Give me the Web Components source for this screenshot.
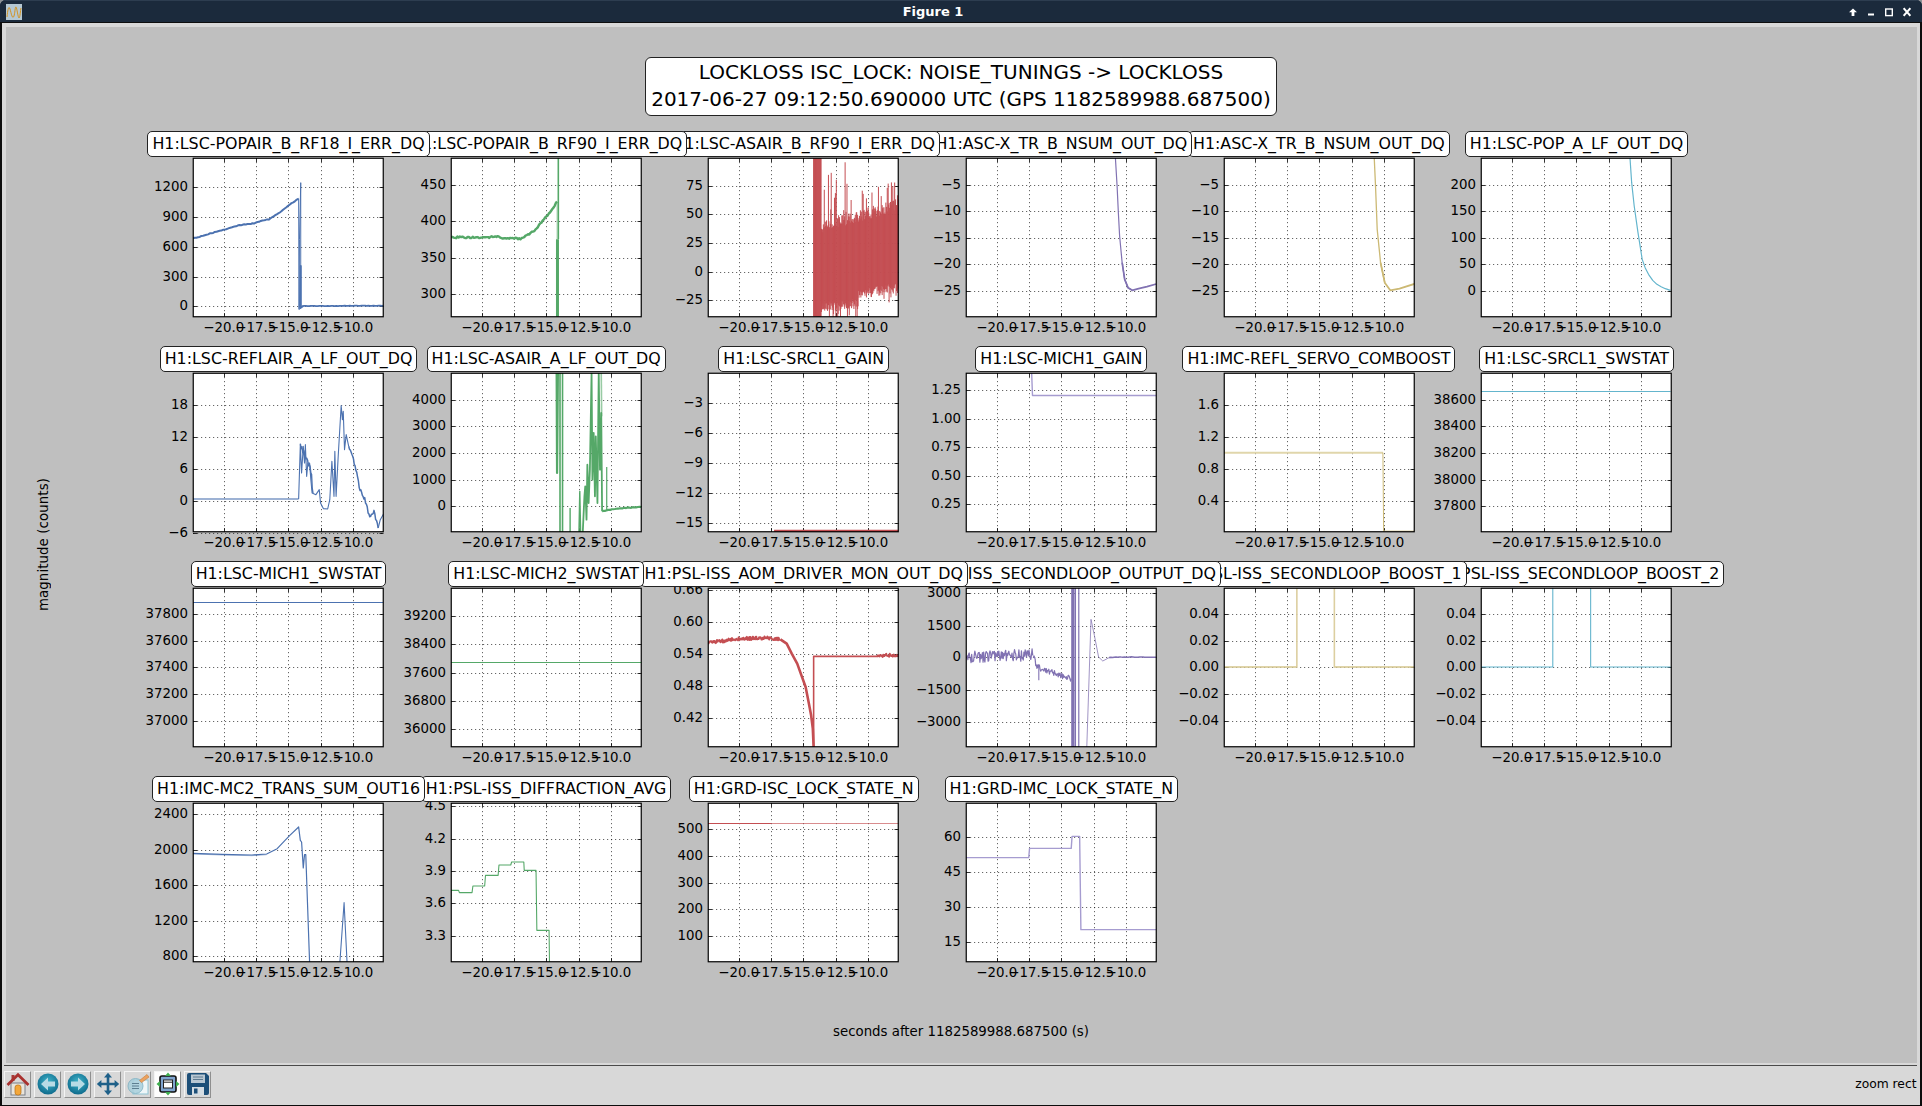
<!DOCTYPE html>
<html><head><meta charset="utf-8"><title>Figure 1</title>
<style>html,body{margin:0;padding:0;width:1922px;height:1106px;overflow:hidden;background:#8d9296;font-family:"DejaVu Sans",sans-serif}</style>
</head><body>
<plot-window></plot-window>
<script>
const FONT='"DejaVu Sans","Liberation Sans",sans-serif';
const BLUE='#4c72b0',GREEN='#55a868',RED='#c44e52',PURP='#8172b2',YEL='#ccb974',CYAN='#64b5cd';
let seed=12345;
const rnd=()=>{seed=(seed*1664525+1013904223)>>>0;return seed/4294967296};
// interpolate a trace and add noise
function N(pts,amp,step){
  let out=[];
  for(let i=0;i<pts.length-1;i++){
    const [a,b]=pts[i],[c,d]=pts[i+1];
    const n=Math.max(1,Math.round(Math.abs(c-a)/step));
    for(let k=0;k<n;k++){out.push((a+(c-a)*k/n).toFixed(1)+','+(b+(d-b)*k/n+(rnd()-.5)*2*amp).toFixed(1));}
  }
  out.push(pts[pts.length-1].join(','));
  return out.join(' ');
}
function redBurst(){
  let s=[];
  for(let x=414;x<=616;x+=1.1){
    let top,bot;
    const t=(x-414)/202;
    if(x<432){top=476;bot=952}
    else{
      top=690-75*t+(rnd()-.5)*36;
      bot=(x<520?925-20*t:885-(x-520)*.2)+(rnd()-.5)*30;
      if(x<525&&rnd()<.07)top=476+rnd()*110;
      else if(rnd()<.09)top-=20+rnd()*70;
      if(x<525&&rnd()<.1)bot=952;
      else if(rnd()<.05)bot+=30;
    }
    s.push(x.toFixed(1)+','+top.toFixed(1)+' '+x.toFixed(1)+','+bot.toFixed(1));
  }
  return s.join('|');
}
const xTicks=[30.7,62.7,95.1,127.9,159.9],xLab=['\u221220.0','\u221217.5','\u221215.0','\u221212.5','\u221210.0'];
const W=190.5,H=159;

class FigPlot extends HTMLElement{
  connectedCallback(){
    if(this.shadowRoot)return;
    const d=this.data,sr=this.attachShadow({mode:'open'});
    const mx=x=>((x-d.ox)/(d.fx||2.376)).toFixed(2),my=y=>((y-d.oy)/3).toFixed(2);
    let g='';
    xTicks.forEach((x,i)=>{const px=Math.round(x)+.5;
      g+=`<line class="grid" x1="${px}" x2="${px}" y1="0" y2="${H}"/><line class="tick" x1="${px}" x2="${px}" y1="0" y2="4"/><line class="tick" x1="${px}" x2="${px}" y1="${H}" y2="${H-4}"/>`;
      g+=`<text class="xl" x="${x}" y="${H+15.4}">${xLab[i]}</text>`;
    });
    d.y.forEach(([lab,zy])=>{const py=Math.round((zy-d.oy)/3)+.5;
      g+=`<line class="grid" x1="0" x2="${W}" y1="${py}" y2="${py}"/><line class="tick" x1="0" x2="4" y1="${py}" y2="${py}"/><line class="tick" x1="${W}" x2="${W-4}" y1="${py}" y2="${py}"/>`;
      g+=`<text class="yl" x="-5" y="${py+3.8}">${lab}</text>`;
    });
    let lines='';
    d.l.forEach(l=>{
      const subs=l.p.split('|').map(s=>{const pts=s.trim().split(/\s+/).map(q=>{const [a,b]=q.split(',');return mx(+a)+','+my(+b)});return 'M'+pts.join('L')}).join('');
      lines+=`<path d="${subs}" fill="none" stroke="${l.c||d.c}" stroke-width="${l.w||1}" stroke-opacity="${l.o||1}" stroke-linejoin="round"/>`;
    });
    sr.innerHTML=`<style>
:host{display:block;position:relative;width:${W}px;height:${H}px;z-index:${d.z}}
svg.ax{display:block;overflow:visible;position:absolute;left:0;top:0}
.grid{stroke:#000;stroke-width:.8;stroke-dasharray:1.2 2.8;stroke-opacity:.75}
.tick{stroke:#000;stroke-width:.8}
text{font:13.33px ${FONT};fill:#000}
.xl{text-anchor:middle}.yl{text-anchor:end}
.wrap{position:absolute;left:-220px;right:-220px;bottom:calc(100% + 1.4px);display:flex;justify-content:center;pointer-events:none}
.pill{background:#fff;border:1px solid #222;border-radius:5px;height:24px;padding:0 4px;font:15.85px/24px ${FONT};color:#000;white-space:nowrap}
</style>
<svg class="ax" width="${W}" height="${H}" viewBox="0 0 ${W} ${H}">
<rect width="${W}" height="${H}" fill="#fff"/>${g}
<svg x="0" y="0" width="${W}" height="${H}" viewBox="0 0 ${W} ${H}" overflow="hidden">${lines}</svg>
<rect x=".25" y=".25" width="${W-.5}" height="${H-.5}" fill="none" stroke="#000" stroke-width="1.2"/>
</svg>
<div class="wrap"><div class="pill">${d.t}</div></div>`;
  }
}
customElements.define('fig-plot',FigPlot);

class FigGrid extends HTMLElement{
  constructor(){super();this.attachShadow({mode:'open'}).innerHTML=`<style>
:host{display:grid;grid-template-columns:repeat(6,${W}px);column-gap:67.1px;row-gap:56px;align-self:start}
</style><slot></slot>`}
}
customElements.define('fig-grid',FigGrid);

class FigSuptitle extends HTMLElement{
  constructor(){super();this.attachShadow({mode:'open'}).innerHTML=`<style>
:host{display:block;justify-self:center;box-sizing:border-box;height:59.4px;padding:1.7px 5px 0;background:#fff;border:1px solid #222;border-radius:6px;font:20px/27px ${FONT};color:#000;text-align:center;white-space:nowrap}
</style><slot></slot>`}
}
customElements.define('fig-suptitle',FigSuptitle);

class ToolButton extends HTMLElement{
  constructor(){super();this.attachShadow({mode:'open'}).innerHTML=`<style>
:host{display:flex;align-items:center;justify-content:center;box-sizing:border-box;width:27px;height:27px;background:var(--b,#d8d8d8);border:1px solid;border-color:#f4f4f4 #8f8f8f #8f8f8f #f4f4f4}
</style><slot></slot>`}
}
customElements.define('tool-button',ToolButton);

class ToolBar extends HTMLElement{
  constructor(){super();const S=(b)=>`<svg width="24" height="24" viewBox="0 0 24 24" xmlns="http://www.w3.org/2000/svg">${b}</svg>`;
  this.attachShadow({mode:'open'}).innerHTML=`<style>
:host{display:flex;align-items:center;flex:1;padding:0 0 2px 0;margin-left:-1.5px;background:#d8d8d8;border-top:1px solid #4a4a4a;margin-top:2px}
.b{display:flex;gap:3px}
.m{margin-left:auto;font:12.3px ${FONT};color:#000}
</style><div class="b">
<tool-button>${S(`<rect x="5" y="11" width="14" height="12" fill="#e9e5dc" stroke="#7b7f88"/><rect x="9" y="13" width="6" height="10" rx="2.5" fill="#f3a73a" stroke="#b56d14" stroke-width=".7"/><rect x="5.5" y="3" width="3" height="6" fill="#a63a38"/><path d="M1.5 13L12 2.8 22.5 13" fill="none" stroke="#a9312f" stroke-width="2.8"/>`)}</tool-button>
<tool-button>${S(`<defs><radialGradient id="g1" cx=".5" cy=".4" r=".6"><stop offset="0" stop-color="#3fb4c9"/><stop offset="1" stop-color="#0f6b8d"/></radialGradient></defs><circle cx="12" cy="12" r="10.5" fill="url(#g1)"/><path d="M5 12l7-6.5V9.5h7v5h-7v4z" fill="#b8dbe5"/>`)}</tool-button>
<tool-button>${S(`<defs><radialGradient id="g2" cx=".5" cy=".4" r=".6"><stop offset="0" stop-color="#3fb4c9"/><stop offset="1" stop-color="#0f6b8d"/></radialGradient></defs><circle cx="12" cy="12" r="10.5" fill="url(#g2)"/><path d="M19 12l-7-6.5V9.5H5v5h7v4z" fill="#b8dbe5"/>`)}</tool-button>
<tool-button>${S(`<path d="M12 4v16M4 12h16" stroke="#1e6089" stroke-width="2.6"/><path d="M12 .8l4 4.6H8zM12 23.2l4-4.6H8zM.8 12l4.6-4v8zM23.2 12l-4.6-4v8z" fill="#1e6089"/>`)}</tool-button>
<tool-button>${S(`<rect x="7" y="8" width="15" height="14" fill="#eef6f8" stroke="#8fc4d4"/><circle cx="9.5" cy="14" r="7.5" fill="#a9d0dc" stroke="#7fb2c4" opacity=".85"/><path d="M6 11.5h7M6 14h7M6 16.5h7" stroke="#5d7f90" stroke-width="1.1"/><path d="M13.5 8.5L21 2.5l2 2.6-7.5 5.5z" fill="#eda25f" stroke="#c47d3a" stroke-width=".6"/>`)}</tool-button>
<tool-button style="--b:#fdfdfd">${S(`<rect x="4" y="4" width="16" height="16" rx="2" fill="#7fa4cf" stroke="#111" stroke-width="1.6"/><rect x="7.5" y="8" width="9" height="8" fill="#fff" stroke="#222"/><path d="M7.5 10.2h9" stroke="#222"/><path d="M12 .5l3 3.5H9zM12 23.5l3-3.5H9zM.5 12L4 9v6zM23.5 12L20 9v6z" fill="#3fae4f"/>`)}</tool-button>
<tool-button>${S(`<path d="M1 3a2 2 0 0 1 2-2h17l3 3v17a2 2 0 0 1-2 2H3a2 2 0 0 1-2-2z" fill="#1d4f78"/><rect x="5" y="2.5" width="14" height="8.5" fill="#b9c7d2"/><path d="M7 5h10M7 7.5h10" stroke="#5d7a90"/><rect x="6" y="15" width="12" height="8" fill="#d5dde3"/><rect x="8" y="16.5" width="3.5" height="5" fill="#1d4f78"/>`)}</tool-button>
</div><div class="m"><slot></slot></div>`}
}
customElements.define('tool-bar',ToolBar);

class FigCanvas extends HTMLElement{
  constructor(){super();this.attachShadow({mode:'open'}).innerHTML=`<style>
:host{display:grid;box-sizing:border-box;height:1036px;flex:none;background:#bfbfbf;grid-template-columns:187.8px 1fr;grid-template-rows:auto auto auto;align-content:start;padding-top:30.3px;font:13.33px ${FONT};color:#000}
.top{grid-column:1/3;display:flex;justify-content:center;margin-bottom:42px}
.yl{writing-mode:vertical-rl;transform:rotate(180deg);align-self:center;justify-self:start;margin:0 0 32px 30px;white-space:nowrap;letter-spacing:.1px}
.xl{grid-column:1/3;text-align:center;margin-top:62px;line-height:16px}
</style>
<div class="top"><slot name="sup"></slot></div>
<div class="yl">magnitude (counts)</div>
<slot name="grid"></slot>
<div class="xl">seconds after 1182589988.687500 (s)</div>`}
}
customElements.define('fig-canvas',FigCanvas);

class PlotWindow extends HTMLElement{
  constructor(){super();this.attachShadow({mode:'open'}).innerHTML=`<style>
:host{display:flex;flex-direction:column;width:1922px;height:1106px;overflow:hidden;border-radius:6px 6px 0 0;background:#1b2a3c}
.bar{display:flex;align-items:center;height:22px;flex:none;background:#1b2a3c;border-top:1px solid #2d3d50;box-sizing:border-box;color:#fff}
.ic{margin-left:6px;width:16px;height:16px;flex:none;display:block}
.tt{flex:1;text-align:center;font:bold 13px/20px ${FONT};padding-right:5px}
.ctl{display:flex;align-items:center;margin-right:11px}
.ctl svg{display:block}
.main{flex:1;display:flex;flex-direction:column;min-height:0;background:#d8d8d8;border:solid #0d0d0d;border-width:1px 2px 1px 2px;padding:3.5px 3.5px 0}
</style>
<div class="bar">
<svg class="ic" viewBox="0 0 16 16"><rect width="16" height="16" fill="#b5c8d3"/><path d="M1 13C2 3 3 2 4 5S6 15 7.5 13 9 2 10 3s2 11 3 11 1.5-8 2-10" fill="none" stroke="#d4921f" stroke-width="1"/></svg>
<div class="tt">Figure 1</div>
<div class="ctl">
<svg width="8" height="10" viewBox="0 0 8 10"><path d="M4 1.5l4 3.8H5.400v3.700H2.600V5.300H0z" fill="#fff"/></svg>
<svg width="6" height="10" viewBox="0 0 6 10" style="margin-left:11px"><rect y="6.5" width="6" height="2" fill="#fff"/></svg>
<svg width="8" height="10" viewBox="0 0 8 10" style="margin-left:11px"><rect x=".7" y="2" width="6.6" height="6.6" fill="none" stroke="#fff" stroke-width="1.4"/></svg>
<svg width="8" height="10" viewBox="0 0 8 10" style="margin-left:10px"><path d="M.6 1.2l6.800 7.600M7.400 1.200L.6 8.800" stroke="#fff" stroke-width="2"/></svg>
</div></div>
<div class="main"><slot></slot></div>`}
}
customElements.define('plot-window',PlotWindow);

const X5=[['\u22125',556],['\u221210',634],['\u221215',716],['\u221220',794],['\u221225',875]];
const B=[['0.04',826],['0.02',907],['0.00',985],['\u22120.02',1066],['\u22120.04',1147]];
const plots=[
{t:'H1:LSC-POPAIR_B_RF18_I_ERR_DQ',c:BLUE,ox:460,oy:476,y:[['1200',562],['900',652],['600',742],['300',832],['0',919]],
 l:[{w:2,p:N([[460,718],[500,703],[535,690],[570,678],[605,672],[625,663],[640,660],[670,636],[690,615],[711,598]],1,4)},
    {w:1,p:'711,598 712,930 713,720 716,550 716,925 713,930 720,920'},{w:2,p:'714,925 716,800 716,925 722,920'},{w:1.8,p:N([[720,920],[913,919]],.6,4)}]},
{t:'H1:LSC-POPAIR_B_RF90_I_ERR_DQ',c:GREEN,ox:1072,oy:476,y:[['450',556],['400',664],['350',775],['300',883]],
 l:[{w:2.4,p:N([[1072,714],[1160,714],[1180,711],[1195,717],[1240,718],[1270,695],[1290,665],[1310,635],[1324,607]],2.5,3)},
    {w:1,o:.5,p:'1324,607 1324,720'},{w:3,p:'1325,720 1325,952'},{w:1.6,p:'1327,476 1327,720'}]},
{t:'H1:LSC-ASAIR_B_RF90_I_ERR_DQ',c:RED,ox:163,oy:476,y:[['75',560],['50',645],['25',730],['0',817],['\u221225',901]],
 l:[{w:1,p:redBurst()}]},
{t:'H1:ASC-X_TR_B_NSUM_OUT_DQ',c:PURP,ox:775,oy:476,y:X5,
 l:[{w:1.2,p:'1130,476 1134,560 1137,640 1140,710 1146,790 1152,840 1160,865 1170,873'},{w:1.7,p:'1146,790 1152,840 1160,865 1170,873 1185,868 1205,862 1227,854'}]},
{t:'H1:ASC-X_TR_B_NSUM_OUT_DQ',c:YEL,ox:-92,oy:476,y:X5,
 l:[{w:1.3,p:'265,476 268,560 272,690 280,790 290,850'},{w:1.8,p:'280,790 290,850 303,873 325,868 362,853'}]},
{t:'H1:LSC-POP_A_LF_OUT_DQ',c:CYAN,ox:522,oy:476,y:[['200',556],['150',634],['100',716],['50',794],['0',874]],
 l:[{w:1.2,p:'876,476 880,550 886,620 895,700 905,780 912,805 920,825 930,843 940,855 950,862 960,868 972,873'}]},

{t:'H1:LSC-REFLAIR_A_LF_OUT_DQ',c:BLUE,ox:460,oy:130,y:[['18',227],['12',323],['6',419],['0',514],['\u22126',610]],
 l:[{w:1.8,o:.55,p:'460,508 711,508'},{w:1.1,p:'711,508 715,345 718,430 722,350 725,400 727,345 730,440 733,400 737,400 740,450 743,490 752,495 760,480 763,520 770,537 780,538 785,510 790,395 795,500 797,365 800,500 805,380 812,228 815,270 817,245 820,360 824,315 830,350'},
    {w:1.5,p:N([[830,350],[845,405],[855,470],[868,510],[880,565],[890,545],[900,595]],7,2)},{w:1.1,p:'900,595 905,570 913,552'},{w:1.4,p:N([[715,350],[740,420],[745,490]],10,2)}]},
{t:'H1:LSC-ASAIR_A_LF_OUT_DQ',c:GREEN,ox:1072,oy:130,y:[['4000',211],['3000',290],['2000',370],['1000',450],['0',530]],
 l:[{w:2.2,p:'1323,130 1324,430 1326,130'},{w:1.6,p:'1331,130 1331,610 1337,610 1337,130'},{w:1.4,p:'1355,535 1355,610'},{w:1.4,p:'1376,610 1378,485 1380,610'},
    {w:1.8,p:'1385,610 1389,500 1391,470 1394,570 1396,405 1399,520 1402,420 1406,130 1408,450 1411,310 1414,500 1416,320 1420,520 1423,130 1426,420 1429,250 1431,545'},
    {w:1.6,o:.6,p:'1429,130 1430,260'},{w:1.2,p:'1442,412 1442,545'},{w:2.2,p:N([[1431,545],[1450,540],[1480,535],[1524,532]],1,4)}]},
{t:'H1:LSC-SRCL1_GAIN',c:RED,ox:115,oy:130,y:[['\u22123',220],['\u22126',310],['\u22129',400],['\u221212',490],['\u221215',580]],
 l:[{w:2.2,p:'272,603.5 569,603.5'}]},
{t:'H1:LSC-MICH1_GAIN',c:'#a69cd0',ox:728,oy:130,y:[['1.25',181],['1.00',268],['0.75',352],['0.50',439],['0.25',523]],
 l:[{w:1.4,p:'884,130 886,197.5 1180,197.5'}]},
{t:'H1:IMC-REFL_SERVO_COMBOOST',c:'#e0d6ab',ox:122,oy:100,fx:2.8,y:[['1.6',197],['1.2',292],['0.8',388],['0.4',484]],
 l:[{w:2,p:'122,339 567,339'},{w:1,c:YEL,p:'567,339 569,578'},{w:1.8,p:'569,575 656,575'}]},
{t:'H1:LSC-SRCL1_SWSTAT',c:CYAN,ox:845,oy:100,fx:2.8,y:[['38600',181],['38400',259],['38200',340],['38000',421],['37800',498]],
 l:[{w:1,p:'845,155.5 1376,155.5'}]},

{t:'H1:LSC-MICH1_SWSTAT',c:BLUE,ox:460,oy:88,y:[['37800',167],['37600',247],['37400',326],['37200',407],['37000',488]],
 l:[{w:1,p:'460,131.5 913,131.5'}]},
{t:'H1:LSC-MICH2_SWSTAT',c:GREEN,ox:1072,oy:88,y:[['39200',172],['38400',256],['37600',343],['36800',427],['36000',511]],
 l:[{w:1,p:'1072,311.5 1524,311.5'}]},
{t:'H1:PSL-ISS_AOM_DRIVER_MON_OUT_DQ',c:RED,ox:163,oy:88,y:[['0.66',94],['0.60',190],['0.54',286],['0.48',382],['0.42',478]],
 l:[{w:2,p:N([[163,250],[190,248],[240,240],[300,238],[335,242]],5,1.4)},{w:2.6,p:'335,242 350,255 362,285 375,315 385,350 395,385 402,430 408,470 412,510 414,565'},
    {w:1.6,p:'414,565 414,293 565,293'},{w:2,p:N([[565,293],[585,290],[616,291]],5,1.4)}]},
{t:'H1:PSL-ISS_SECONDLOOP_OUTPUT_DQ',c:PURP,ox:775,oy:88,y:[['3000',102],['1500',202],['0',296],['\u22121500',394],['\u22123000',490]],
 l:[{w:1.2,p:N([[775,295],[850,292],[935,288]],18,1.5)},{w:1.2,p:N([[935,295],[945,325],[1000,350],[1025,360]],9,1.5)},{w:1.1,p:'948,320 948,365'},
    {w:3.4,p:'1029,88 1029,565'},{w:1.2,p:'1035,88 1035,565'},{w:1.2,p:'1043,88 1043,565'},{w:1,o:.75,p:'1062,565 1072,182 1080,230 1090,295 1100,307 1115,297 1130,296'},{w:1.5,p:N([[1115,296],[1160,295],[1227,296]],.6,4)}]},
{t:'H1:PSL-ISS_SECONDLOOP_BOOST_1',c:'#dccfa0',ox:122,oy:748,fx:2.8,y:B,
 l:[{w:1.6,p:'122,985 326,985 326,748'},{w:1.6,p:'431,748 431,985 656,985'},{w:.8,c:YEL,o:.5,p:'122,985 326,985|431,985 656,985'}]},
{t:'H1:PSL-ISS_SECONDLOOP_BOOST_2',c:CYAN,ox:845,oy:748,fx:2.8,y:B,
 l:[{w:1.1,p:'845,985 1046,985 1046,748'},{w:1.1,p:'1152,748 1152,985 1376,985'}]},

{t:'H1:IMC-MC2_TRANS_SUM_OUT16',c:BLUE,ox:460,oy:103,y:[['2400',137],['2000',244],['1600',350],['1200',457],['800',563]],
 l:[{w:1.2,p:'460,254 530,257 600,259 635,256 660,240 690,200 711,175 715,215 718,220 722,298 725,258 728,258 737,580'},{w:1,o:.5,p:'460,256 530,259 600,261 635,258'},{w:1.1,p:'809,580 819,402 826,580'}]},
{t:'H1:PSL-ISS_DIFFRACTION_AVG',c:GREEN,ox:1072,oy:103,y:[['4.5',112],['4.2',211],['3.9',307],['3.6',403],['3.3',502]],
 l:[{w:1.1,p:'1072,365 1090,365 1092,372 1122,372 1124,352 1152,352 1154,320 1184,320 1186,289 1214,289 1216,280 1245,280 1246,305 1274,305 1276,485 1305,485 1306,580'}]},
{t:'H1:GRD-ISC_LOCK_STATE_N',c:RED,ox:115,oy:103,y:[['500',180],['400',262],['300',343],['200',421],['100',503]],
 l:[{w:1,p:'115,164.5 265,164.5'},{w:1.2,o:.65,p:'265,164.5 569,164.5'}]},
{t:'H1:GRD-IMC_LOCK_STATE_N',c:'#a69cd0',ox:728,oy:103,y:[['60',205],['45',310],['30',415],['15',520]],
 l:[{w:1.4,p:'728,267 877,267 879,239 978,239 980,203 998,203 1001,483 1180,483'}]},
];

const win=document.querySelector('plot-window');
const canvas=document.createElement('fig-canvas');
const sup=document.createElement('fig-suptitle');
sup.slot='sup';
sup.innerHTML='LOCKLOSS ISC_LOCK: NOISE_TUNINGS -&gt; LOCKLOSS<br>2017-06-27 09:12:50.690000 UTC (GPS 1182589988.687500)';
const grid=document.createElement('fig-grid');
grid.slot='grid';
canvas.append(sup,grid);
plots.forEach((d,i)=>{d.z=100-i;const p=document.createElement('fig-plot');p.data=d;grid.appendChild(p)});
const bar=document.createElement('tool-bar');
bar.textContent='zoom rect';
win.append(canvas,bar);
</script>
</body></html>
